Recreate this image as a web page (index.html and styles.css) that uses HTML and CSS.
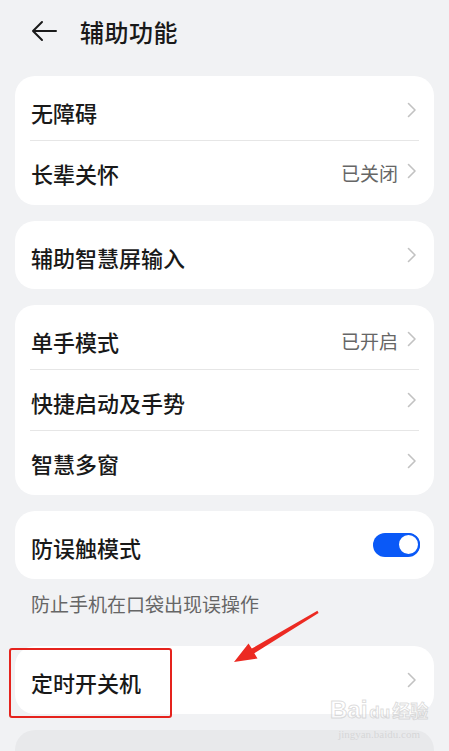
FILE: index.html
```html
<!DOCTYPE html>
<html lang="zh-CN">
<head>
<meta charset="UTF-8">
<meta name="viewport" content="width=device-width, initial-scale=1.0">
<title>辅助功能</title>
<link rel="stylesheet" href="styles.css">
</head>
<body>
<div class="page">
  <div class="header">
    <svg class="back" width="26" height="22" viewBox="0 0 26 22">
      <path d="M25 11 H2 M11 2 L2 11 L11 20" fill="none" stroke="#1a1a1a" stroke-width="2" stroke-linecap="round" stroke-linejoin="round"/>
    </svg>
    <h1>辅助功能</h1>
  </div>

  <div class="card">
    <div class="row">
      <span class="label">无障碍</span>
      <svg class="chevron" width="10" height="16" viewBox="0 0 10 16"><path d="M1.5 1.5 L8 8 L1.5 14.5" fill="none" stroke="#c2c2c2" stroke-width="1.6" stroke-linecap="round" stroke-linejoin="round"/></svg>
    </div>
    <div class="divider"></div>
    <div class="row">
      <span class="label">长辈关怀</span>
      <span class="value">已关闭</span>
      <svg class="chevron" width="10" height="16" viewBox="0 0 10 16"><path d="M1.5 1.5 L8 8 L1.5 14.5" fill="none" stroke="#c2c2c2" stroke-width="1.6" stroke-linecap="round" stroke-linejoin="round"/></svg>
    </div>
  </div>

  <div class="card">
    <div class="row">
      <span class="label">辅助智慧屏输入</span>
      <svg class="chevron" width="10" height="16" viewBox="0 0 10 16"><path d="M1.5 1.5 L8 8 L1.5 14.5" fill="none" stroke="#c2c2c2" stroke-width="1.6" stroke-linecap="round" stroke-linejoin="round"/></svg>
    </div>
  </div>

  <div class="card">
    <div class="row">
      <span class="label">单手模式</span>
      <span class="value">已开启</span>
      <svg class="chevron" width="10" height="16" viewBox="0 0 10 16"><path d="M1.5 1.5 L8 8 L1.5 14.5" fill="none" stroke="#c2c2c2" stroke-width="1.6" stroke-linecap="round" stroke-linejoin="round"/></svg>
    </div>
    <div class="divider"></div>
    <div class="row">
      <span class="label">快捷启动及手势</span>
      <svg class="chevron" width="10" height="16" viewBox="0 0 10 16"><path d="M1.5 1.5 L8 8 L1.5 14.5" fill="none" stroke="#c2c2c2" stroke-width="1.6" stroke-linecap="round" stroke-linejoin="round"/></svg>
    </div>
    <div class="divider"></div>
    <div class="row">
      <span class="label">智慧多窗</span>
      <svg class="chevron" width="10" height="16" viewBox="0 0 10 16"><path d="M1.5 1.5 L8 8 L1.5 14.5" fill="none" stroke="#c2c2c2" stroke-width="1.6" stroke-linecap="round" stroke-linejoin="round"/></svg>
    </div>
  </div>

  <div class="card">
    <div class="row">
      <span class="label">防误触模式</span>
      <span class="toggle"><span class="knob"></span></span>
    </div>
  </div>
  <p class="caption">防止手机在口袋出现误操作</p>

  <div class="card">
    <div class="row">
      <span class="label">定时开关机</span>
      <svg class="chevron" width="10" height="16" viewBox="0 0 10 16"><path d="M1.5 1.5 L8 8 L1.5 14.5" fill="none" stroke="#c2c2c2" stroke-width="1.6" stroke-linecap="round" stroke-linejoin="round"/></svg>
    </div>
  </div>

  <div class="card card-dim"></div>

  <!-- annotation overlays -->
  <div class="highlight"></div>
  <svg class="arrow" width="449" height="751" viewBox="0 0 449 751">
    <polygon points="234,662 248.5,643.5 251.8,648.6 317.4,610.8 318.6,613.1 254.3,653.2 257.5,658.5" fill="#ec2a22"/>
  </svg>
  <div class="watermark">
    <span class="wm-logo">Bai<span class="wm-du">du</span><span class="wm-cn">经验</span></span>
    <span class="wm-url">jingyan.baidu.com</span>
  </div>
</div>
</body>
</html>
```

FILE: styles.css
```css
body {
  margin: 0;
  background-color: #f1f2f4;
  font-family: "Noto Sans CJK SC", "Noto Sans", sans-serif;
  color: #191919;
}
.page {
  position: relative;
  width: 449px;
  height: 751px;
  overflow: hidden;
}
.header {
  display: flex;
  align-items: center;
  height: 62px;
  padding-left: 31px;
  margin-bottom: 14px;
}
.back {
  margin-right: 23px;
}
h1 {
  margin: 0;
  font-size: 24px;
  font-weight: 500;
  letter-spacing: 0.5px;
}
.card {
  margin: 0 15px 16px;
  background-color: #fff;
  border-radius: 20px;
  padding: 4px 0;
}
.row {
  display: flex;
  align-items: center;
  height: 60px;
  padding: 0 17px 0 16px;
}
.label {
  flex: 1;
  font-size: 22px;
  font-weight: 500;
  line-height: 30px;
  padding-top: 4px;
}
.value {
  font-size: 19px;
  color: #666;
  margin-right: 9px;
  padding-top: 3px;
}
.chevron {
  display: block;
}
.divider {
  height: 1px;
  background-color: #e6e6e6;
  margin: 0 15px;
}
.toggle {
  position: relative;
  width: 47px;
  height: 24px;
  border-radius: 12px;
  background-color: #0a59f7;
  margin-right: -3px;
}
.knob {
  position: absolute;
  right: 0;
  top: 0;
  width: 19px;
  height: 19px;
  border: 2.5px solid #0a59f7;
  border-radius: 50%;
  background-color: #fff;
}
.caption {
  margin: -4px 0 29px;
  padding: 0 31px;
  font-size: 19px;
  line-height: 26px;
  color: #666;
}
.card-dim {
  background-color: #e8e9eb;
  height: 60px;
}
.highlight {
  position: absolute;
  left: 9px;
  top: 648px;
  width: 159px;
  height: 66px;
  border: 2.5px solid #e5231d;
  border-radius: 3px;
}
.arrow {
  position: absolute;
  left: 0;
  top: 0;
}
.watermark {
  position: absolute;
  left: 330px;
  top: 696px;
  display: flex;
  flex-direction: column;
  align-items: center;
  white-space: nowrap;
  color: rgba(255, 255, 255, 0.6);
}
.wm-logo {
  font-family: "Liberation Sans", sans-serif;
  font-size: 24px;
  font-weight: bold;
  line-height: 28px;
  -webkit-text-stroke: 1px rgba(180, 180, 180, 0.45);
}
.wm-du {
  font-size: 17px;
  margin: 0 2px;
}
.wm-cn {
  font-family: "Noto Sans CJK SC", sans-serif;
  font-size: 18px;
}
.wm-url {
  font-family: "Liberation Serif", serif;
  font-size: 11px;
  line-height: 14px;
  color: rgba(190, 190, 190, 0.45);
}
```
